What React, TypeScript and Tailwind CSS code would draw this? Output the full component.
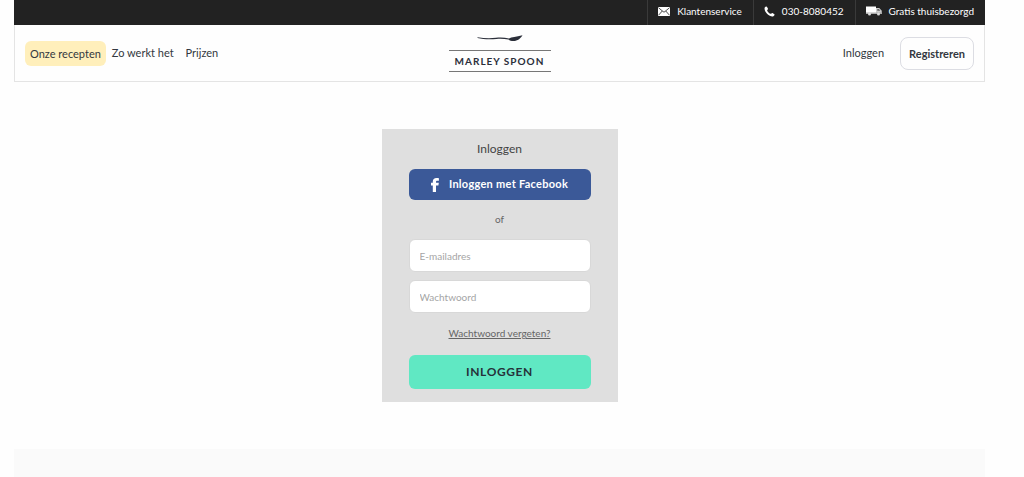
import React from "react";

type TopLink = {
  label: string;
  href: string;
  icon: React.ReactNode;
};

const MailIcon = () => (
  <svg width="12" height="9" viewBox="0 0 24 18" aria-hidden="true">
    <rect width="24" height="18" rx="1" fill="#fff" />
    <path d="M1 1.500 12 10.500 23 1.500M1 16.500 8.500 8M23 16.500 15.500 8" fill="none" stroke="#222" strokeWidth="1.6" />
  </svg>
);

const PhoneIcon = () => (
  <svg width="11" height="11" viewBox="0 0 22 22" aria-hidden="true">
    <path
      d="M1.500 3.200C2.600 1.500 4 .6 5 1c1.200.8 2.500 3 3 4.600.3 1.200-1.800 2-1.700 3.200.6 2.600 4.300 6.200 6.900 6.900 1.300.1 2.200-2 3.400-1.700 1.600.5 3.700 1.900 4.400 3 .4 1-.6 2.600-2.200 3.600C12.500 23.500-1.500 11 1.500 3.200z"
      fill="#fff"
    />
  </svg>
);

const TruckIcon = () => (
  <svg width="16" height="10" viewBox="0 0 32 20" aria-hidden="true">
    <path d="M0 1h20v13H0z" fill="#fff" />
    <path d="M20 4h6.500l5 5.500V14H20z" fill="#ccc" />
    <path d="M22.500 6h3.300l3 3.500h-6.300z" fill="#666" />
    <path d="M0 13h32v3H0z" fill="#aaa" />
    <circle cx="7" cy="16" r="3" fill="#ddd" />
    <circle cx="25" cy="16" r="3" fill="#ddd" />
  </svg>
);

const SpoonIcon = () => (
  <svg width="46" height="8" viewBox="0 0 46 8" aria-hidden="true">
    <path
      d="M.5 2.200C7 3.300 13 3.500 19 2.800c5-.5 9-.1 13 .6C34.500 1.800 39 2 45.500.2 43.500 3.500 40.500 6 36.500 6c-2.300 0-3.800-.7-5-1.600-4-.6-8-.9-12-.5C13 4.500 6 4.300.5 3z"
      fill="#2b2f3a"
    />
  </svg>
);

const FacebookIcon = () => (
  <svg width="8" height="14" viewBox="0 0 8 14" aria-hidden="true">
    <path
      d="M1.800 14V7.500H0V4.800h1.800V3.600C1.800 1.200 3.200 0 5.500 0c1 0 1.900.1 2.400.2v2.600H6.400c-1 0-1.400.4-1.400 1.100v.9h2.800l-.4 2.700H5V14z"
      fill="#fff"
    />
  </svg>
);

const topLinks: TopLink[] = [
  { label: "Klantenservice", href: "#service", icon: <MailIcon /> },
  { label: "030-8080452", href: "tel:0308080452", icon: <PhoneIcon /> },
  { label: "Gratis thuisbezorgd", href: "#bezorging", icon: <TruckIcon /> },
];

const TopBar = () => (
  <div className="flex h-[25px] justify-end bg-[#222222] text-[10px] text-white">
    {topLinks.map((link) => (
      <a
        key={link.label}
        href={link.href}
        className="flex items-center gap-[7px] border-l border-[#3a3a3a] pr-[11px] pb-[3px] pl-2.5"
      >
        {link.icon}
        {link.label}
      </a>
    ))}
  </div>
);

const Header = () => (
  <header className="grid grid-cols-[1fr_auto_1fr] items-center border border-t-0 border-[#e4e4e4] px-2.5 pt-2.5 pb-[9px] text-[11px] text-[#333840]">
    <nav className="flex items-center">
      <a href="#recepten" className="mr-1.5 rounded-md bg-[#ffefbb] px-[5px] py-1 leading-[17px]">
        Onze recepten
      </a>
      <a href="#hoe" className="mr-3">
        Zo werkt het
      </a>
      <a href="#prijzen">Prijzen</a>
    </nav>
    <a href="#home" className="flex flex-col items-center gap-[7px]" aria-label="Marley Spoon">
      <SpoonIcon />
      <span className="w-[102px] border-y border-[#777777] text-center text-[10px] leading-5 font-bold tracking-widest text-[#2b2f3a]">
        MARLEY SPOON
      </span>
    </a>
    <div className="flex items-center justify-end gap-4">
      <a href="#inloggen">Inloggen</a>
      <button type="button" className="rounded-lg border border-[#dcdde3] px-2 py-[7px] leading-[17px] font-bold">
        Registreren
      </button>
    </div>
  </header>
);

const inputStyle =
  "h-[33px] w-full rounded-md border border-[#d8d8d8] bg-white px-2.5 text-[10px] text-[#333333] outline-none placeholder:text-[#a5a5a5]";

const LoginForm = () => (
  <form className="w-[236px] bg-[#dfdfdf] px-[27px] pt-3 pb-[13px] text-center">
    <h1 className="text-[12px] leading-4 text-[#444444]">Inloggen</h1>
    <button
      type="button"
      className="mt-3 flex h-[31px] w-full items-center justify-center gap-2.5 rounded-md bg-[#3b5998] text-[11px] font-bold tracking-wide text-white"
    >
      <FacebookIcon />
      Inloggen met Facebook
    </button>
    <p className="mt-[11px] mb-3 text-[10px] leading-4 text-[#666666]">of</p>
    <div className="flex flex-col gap-2">
      <input type="email" aria-label="E-mailadres" placeholder="E-mailadres" className={inputStyle} />
      <input type="password" aria-label="Wachtwoord" placeholder="Wachtwoord" className={inputStyle} />
    </div>
    <a href="#vergeten" className="mt-3 block text-[10px] leading-4 text-[#666666] underline">
      Wachtwoord vergeten?
    </a>
    <button
      type="submit"
      className="mt-3.5 h-[34px] w-full rounded-md bg-[#60e8c3] text-[12px] font-bold tracking-wider text-[#26323a]"
    >
      INLOGGEN
    </button>
  </form>
);

const App: React.FC = () => {
  return (
    <div className="flex min-h-screen flex-col bg-[#fefefe] pr-[39px] pl-3.5 font-['Lato',sans-serif]">
      <TopBar />
      <Header />
      <main className="flex justify-center py-[47px]">
        <LoginForm />
      </main>
      <footer className="min-h-7 grow bg-[#fafafa]" />
    </div>
  );
};

export default App;
